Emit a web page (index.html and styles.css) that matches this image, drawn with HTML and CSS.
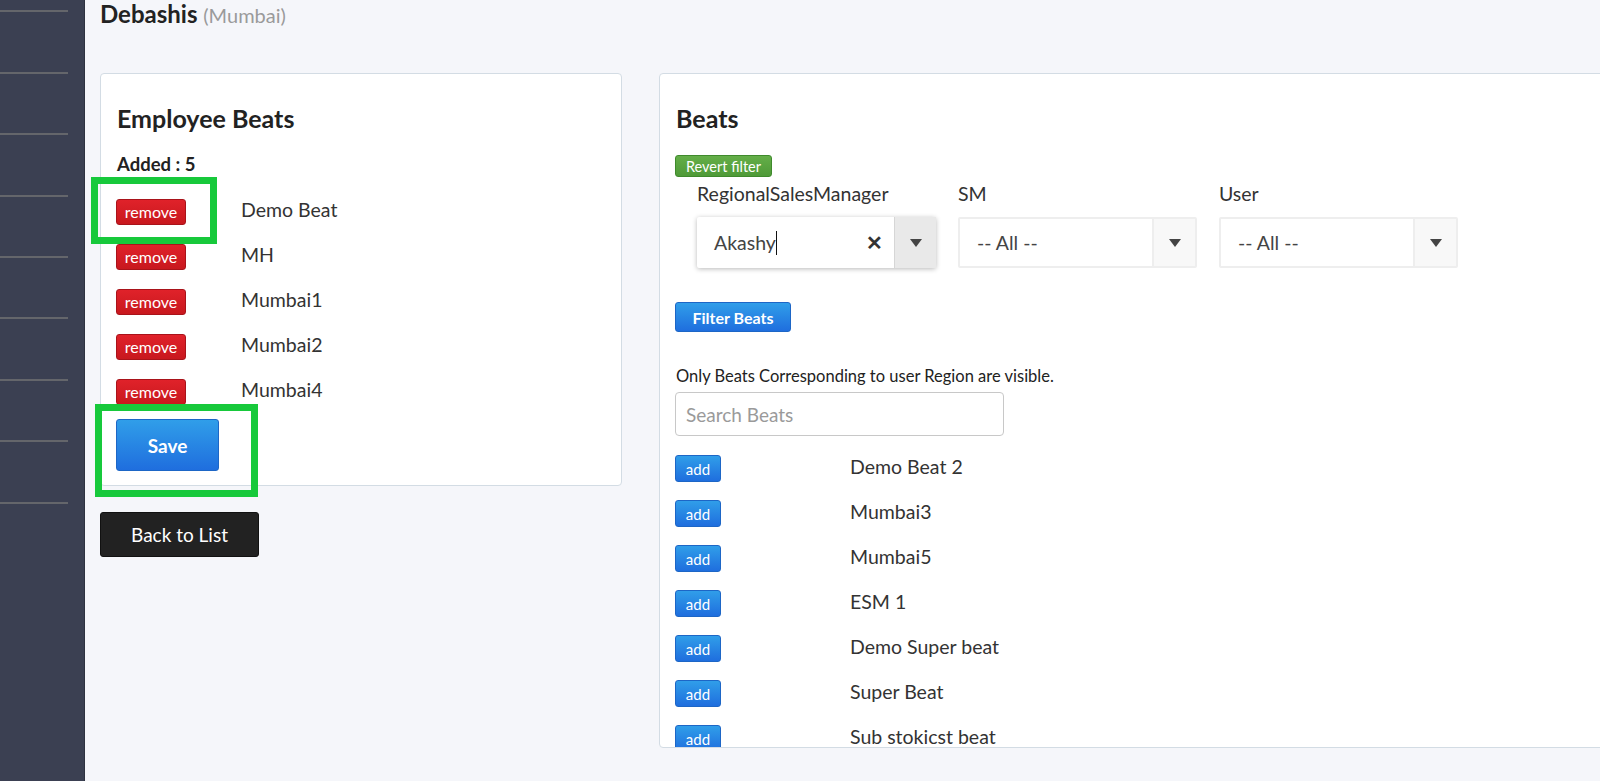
FILE: index.html
```html
<!DOCTYPE html>
<html lang="en">
<head>
    <meta charset="UTF-8">
    <meta name="viewport" content="width=device-width, initial-scale=1.0">
    <title>Employee Beats - Debashis</title>
    <link rel="stylesheet" href="styles.css">
</head>
<body>
    <div class="layout">
        <aside class="sidebar">
            <div class="nav-item"></div>
            <div class="nav-item"></div>
            <div class="nav-item"></div>
            <div class="nav-item"></div>
            <div class="nav-item"></div>
            <div class="nav-item"></div>
            <div class="nav-item"></div>
            <div class="nav-item"></div>
            <div class="nav-item"></div>
        </aside>

        <main class="main">
            <h2 class="page-title">Debashis <small>(Mumbai)</small></h2>

            <div class="cards">
                <div class="left-col">
                    <div class="card emp-card">
                        <h3 class="card-title">Employee Beats</h3>
                        <div class="added">Added : 5</div>
                        <div class="beat-list">
                            <div class="beat-row"><button class="btn btn-remove">remove</button><span>Demo Beat</span></div>
                            <div class="beat-row"><button class="btn btn-remove">remove</button><span>MH</span></div>
                            <div class="beat-row"><button class="btn btn-remove">remove</button><span>Mumbai1</span></div>
                            <div class="beat-row"><button class="btn btn-remove">remove</button><span>Mumbai2</span></div>
                            <div class="beat-row"><button class="btn btn-remove">remove</button><span>Mumbai4</span></div>
                        </div>
                        <button class="btn btn-blue btn-save">Save</button>

                        <!-- 标注框 -->
                        <div class="mark mark-remove"></div>
                        <div class="mark mark-save"></div>
                    </div>
                    <button class="btn btn-dark">Back to List</button>
                </div>

                <div class="card beats-card">
                    <h3 class="card-title">Beats</h3>
                    <button class="btn btn-green">Revert filter</button>

                    <div class="filters">
                        <div class="filter-col">
                            <label>RegionalSalesManager</label>
                            <div class="select active">
                                <span class="select-value">Akashy<i class="caret"></i></span>
                                <span class="select-clear">&#x2715;</span>
                                <span class="select-arrow"><b></b></span>
                            </div>
                        </div>
                        <div class="filter-col">
                            <label>SM</label>
                            <div class="select">
                                <span class="select-value">-- All --</span>
                                <span class="select-arrow"><b></b></span>
                            </div>
                        </div>
                        <div class="filter-col">
                            <label>User</label>
                            <div class="select">
                                <span class="select-value">-- All --</span>
                                <span class="select-arrow"><b></b></span>
                            </div>
                        </div>
                    </div>

                    <button class="btn btn-blue btn-filter">Filter Beats</button>

                    <p class="note">Only Beats Corresponding to user Region are visible.</p>
                    <input type="text" class="search" placeholder="Search Beats">

                    <div class="beat-list add-list">
                        <div class="beat-row"><button class="btn btn-blue btn-add">add</button><span>Demo Beat 2</span></div>
                        <div class="beat-row"><button class="btn btn-blue btn-add">add</button><span>Mumbai3</span></div>
                        <div class="beat-row"><button class="btn btn-blue btn-add">add</button><span>Mumbai5</span></div>
                        <div class="beat-row"><button class="btn btn-blue btn-add">add</button><span>ESM 1</span></div>
                        <div class="beat-row"><button class="btn btn-blue btn-add">add</button><span>Demo Super beat</span></div>
                        <div class="beat-row"><button class="btn btn-blue btn-add">add</button><span>Super Beat</span></div>
                        <div class="beat-row"><button class="btn btn-blue btn-add">add</button><span>Sub stokicst beat</span></div>
                    </div>
                </div>
            </div>
        </main>
    </div>
</body>
</html>
```

FILE: styles.css
```css
/* 基础 */
html, body {
    margin: 0;
    height: 100%;
    overflow: hidden;
}
body {
    font-family: Lato, "Open Sans", sans-serif;
    background: #f5f6fa;
    color: #222;
}
.layout {
    display: flex;
    height: 100%;
}

/* 侧边栏 */
.sidebar {
    width: 84px;
    flex-shrink: 0;
    background: #3b4052;
    border-right: 1px solid #2e3240;
    margin-top: -49px;
}
.nav-item {
    height: 59.4px;
    width: 68px;
    border-bottom: 2px solid #64666b;
}

/* 主区域 */
.main {
    flex: 1;
    padding-left: 15px;
    overflow: hidden;
}
.page-title {
    margin: 0;
    font-size: 24px;
    line-height: 28px;
    font-weight: 700;
    color: #222;
}
.page-title small {
    font-size: 20px;
    line-height: 1;
    font-weight: 400;
    color: #9a9a9a;
}
.cards {
    display: flex;
    align-items: flex-start;
    gap: 37px;
    margin-top: 45px;
}
.card {
    background: #fff;
    border: 1px solid #d3dce4;
    border-radius: 4px;
    padding: 30px 16px 14px;
}
.card-title {
    margin: 0;
    font-size: 25px;
    line-height: 29px;
    font-weight: 700;
    color: #222;
}

/* 左侧卡片 */
.emp-card {
    position: relative;
    width: 488px;
}
.added {
    margin-top: 20px;
    font-size: 18.5px;
    line-height: 22px;
    font-weight: 700;
}
.beat-list {
    margin-top: 14px;
}
.beat-row {
    display: grid;
    grid-template-columns: 125px 1fr;
    align-items: center;
    height: 45px;
    font-size: 19.5px;
    color: #333;
}
.beat-row span {
    padding-bottom: 5px;
}
.emp-card .beat-row {
    margin-left: -1px;
}

/* 按钮 */
.btn {
    font-family: inherit;
    color: #fff;
    border-radius: 3px;
    cursor: pointer;
    padding: 0;
}
.btn-remove {
    width: 70px;
    height: 26px;
    font-size: 16px;
    background: linear-gradient(#e0222a, #c8181e);
    border: 1px solid #a9131a;
}
.btn-blue {
    background: linear-gradient(#309ee9, #1f6ede);
    border: 1px solid #1d66c6;
}
.btn-save {
    display: block;
    width: 103px;
    height: 52px;
    margin: 5px 0 0 -1px;
    font-size: 19px;
    font-weight: 700;
}
.btn-dark {
    display: block;
    margin-top: 26px;
    width: 159px;
    height: 45px;
    background: #222;
    border: 1px solid #111;
    font-size: 19px;
}
.btn-green {
    display: block;
    margin-top: 22px;
    margin-left: -1px;
    width: 97px;
    height: 22px;
    font-size: 14.5px;
    background: linear-gradient(#64ae48, #4f9a38);
    border: 1px solid #3f8a2c;
}
.btn-filter {
    display: block;
    margin: 34px 0 0 -1px;
    width: 116px;
    height: 30px;
    font-size: 16px;
    font-weight: 700;
}
.btn-add {
    width: 46px;
    height: 27px;
    font-size: 15px;
}

/* 标注框 */
.mark {
    position: absolute;
    border: 7px solid #17c93b;
}
.mark-remove {
    left: -10px;
    top: 103px;
    width: 112px;
    height: 53px;
}
.mark-save {
    left: -6px;
    top: 330px;
    width: 149px;
    height: 79px;
}

/* 右侧卡片 */
.beats-card {
    width: 1000px;
    height: 629px;
    overflow: hidden;
    flex-shrink: 0;
}
.filters {
    display: grid;
    grid-template-columns: repeat(3, 261px);
}
.filter-col {
    padding-left: 21px;
}
.filter-col label {
    display: block;
    margin-top: 5px;
    font-size: 19.5px;
    line-height: 23px;
    color: #333;
}
.select {
    display: flex;
    align-items: center;
    width: 239px;
    height: 51px;
    margin-top: 12px;
    box-sizing: border-box;
    border: 2px solid #eee;
    border-radius: 2px;
    background: #fff;
    font-size: 19.5px;
    color: #444;
}
.select.active {
    border: none;
    box-shadow: 0 1px 5px rgba(0,0,0,0.28);
}
.select-value {
    flex: 1;
    padding-left: 17px;
}
.caret {
    display: inline-block;
    width: 1px;
    height: 24px;
    background: #111;
    vertical-align: -5px;
}
.select-clear {
    width: 20px;
    margin-right: 10px;
    font-size: 20px;
    font-weight: 700;
    color: #333;
    text-align: center;
}
.select-arrow {
    display: flex;
    align-items: center;
    justify-content: center;
    width: 41px;
    height: 100%;
    background: #f8f8f8;
    border-left: 2px solid #eee;
}
.select.active .select-arrow {
    background: #e9e9e9;
    border-left: 1px solid #d6d6d6;
}
.select-arrow b {
    width: 0;
    height: 0;
    border-left: 6px solid transparent;
    border-right: 6px solid transparent;
    border-top: 8px solid #444;
}
.note {
    margin: 34px 0 0;
    font-size: 16.5px;
    line-height: 20px;
    color: #222;
}
.search {
    display: block;
    margin: 6px 0 0 -1px;
    width: 329px;
    height: 44px;
    box-sizing: border-box;
    border: 1px solid #c8c8c8;
    border-radius: 4px;
    padding: 0 10px;
    font-family: inherit;
    font-size: 19px;
}
.search::placeholder {
    color: #9a9a9a;
}
.add-list {
    margin-top: 10px;
}
.add-list .beat-row {
    grid-template-columns: 175px 1fr;
    margin-left: -1px;
}
```
